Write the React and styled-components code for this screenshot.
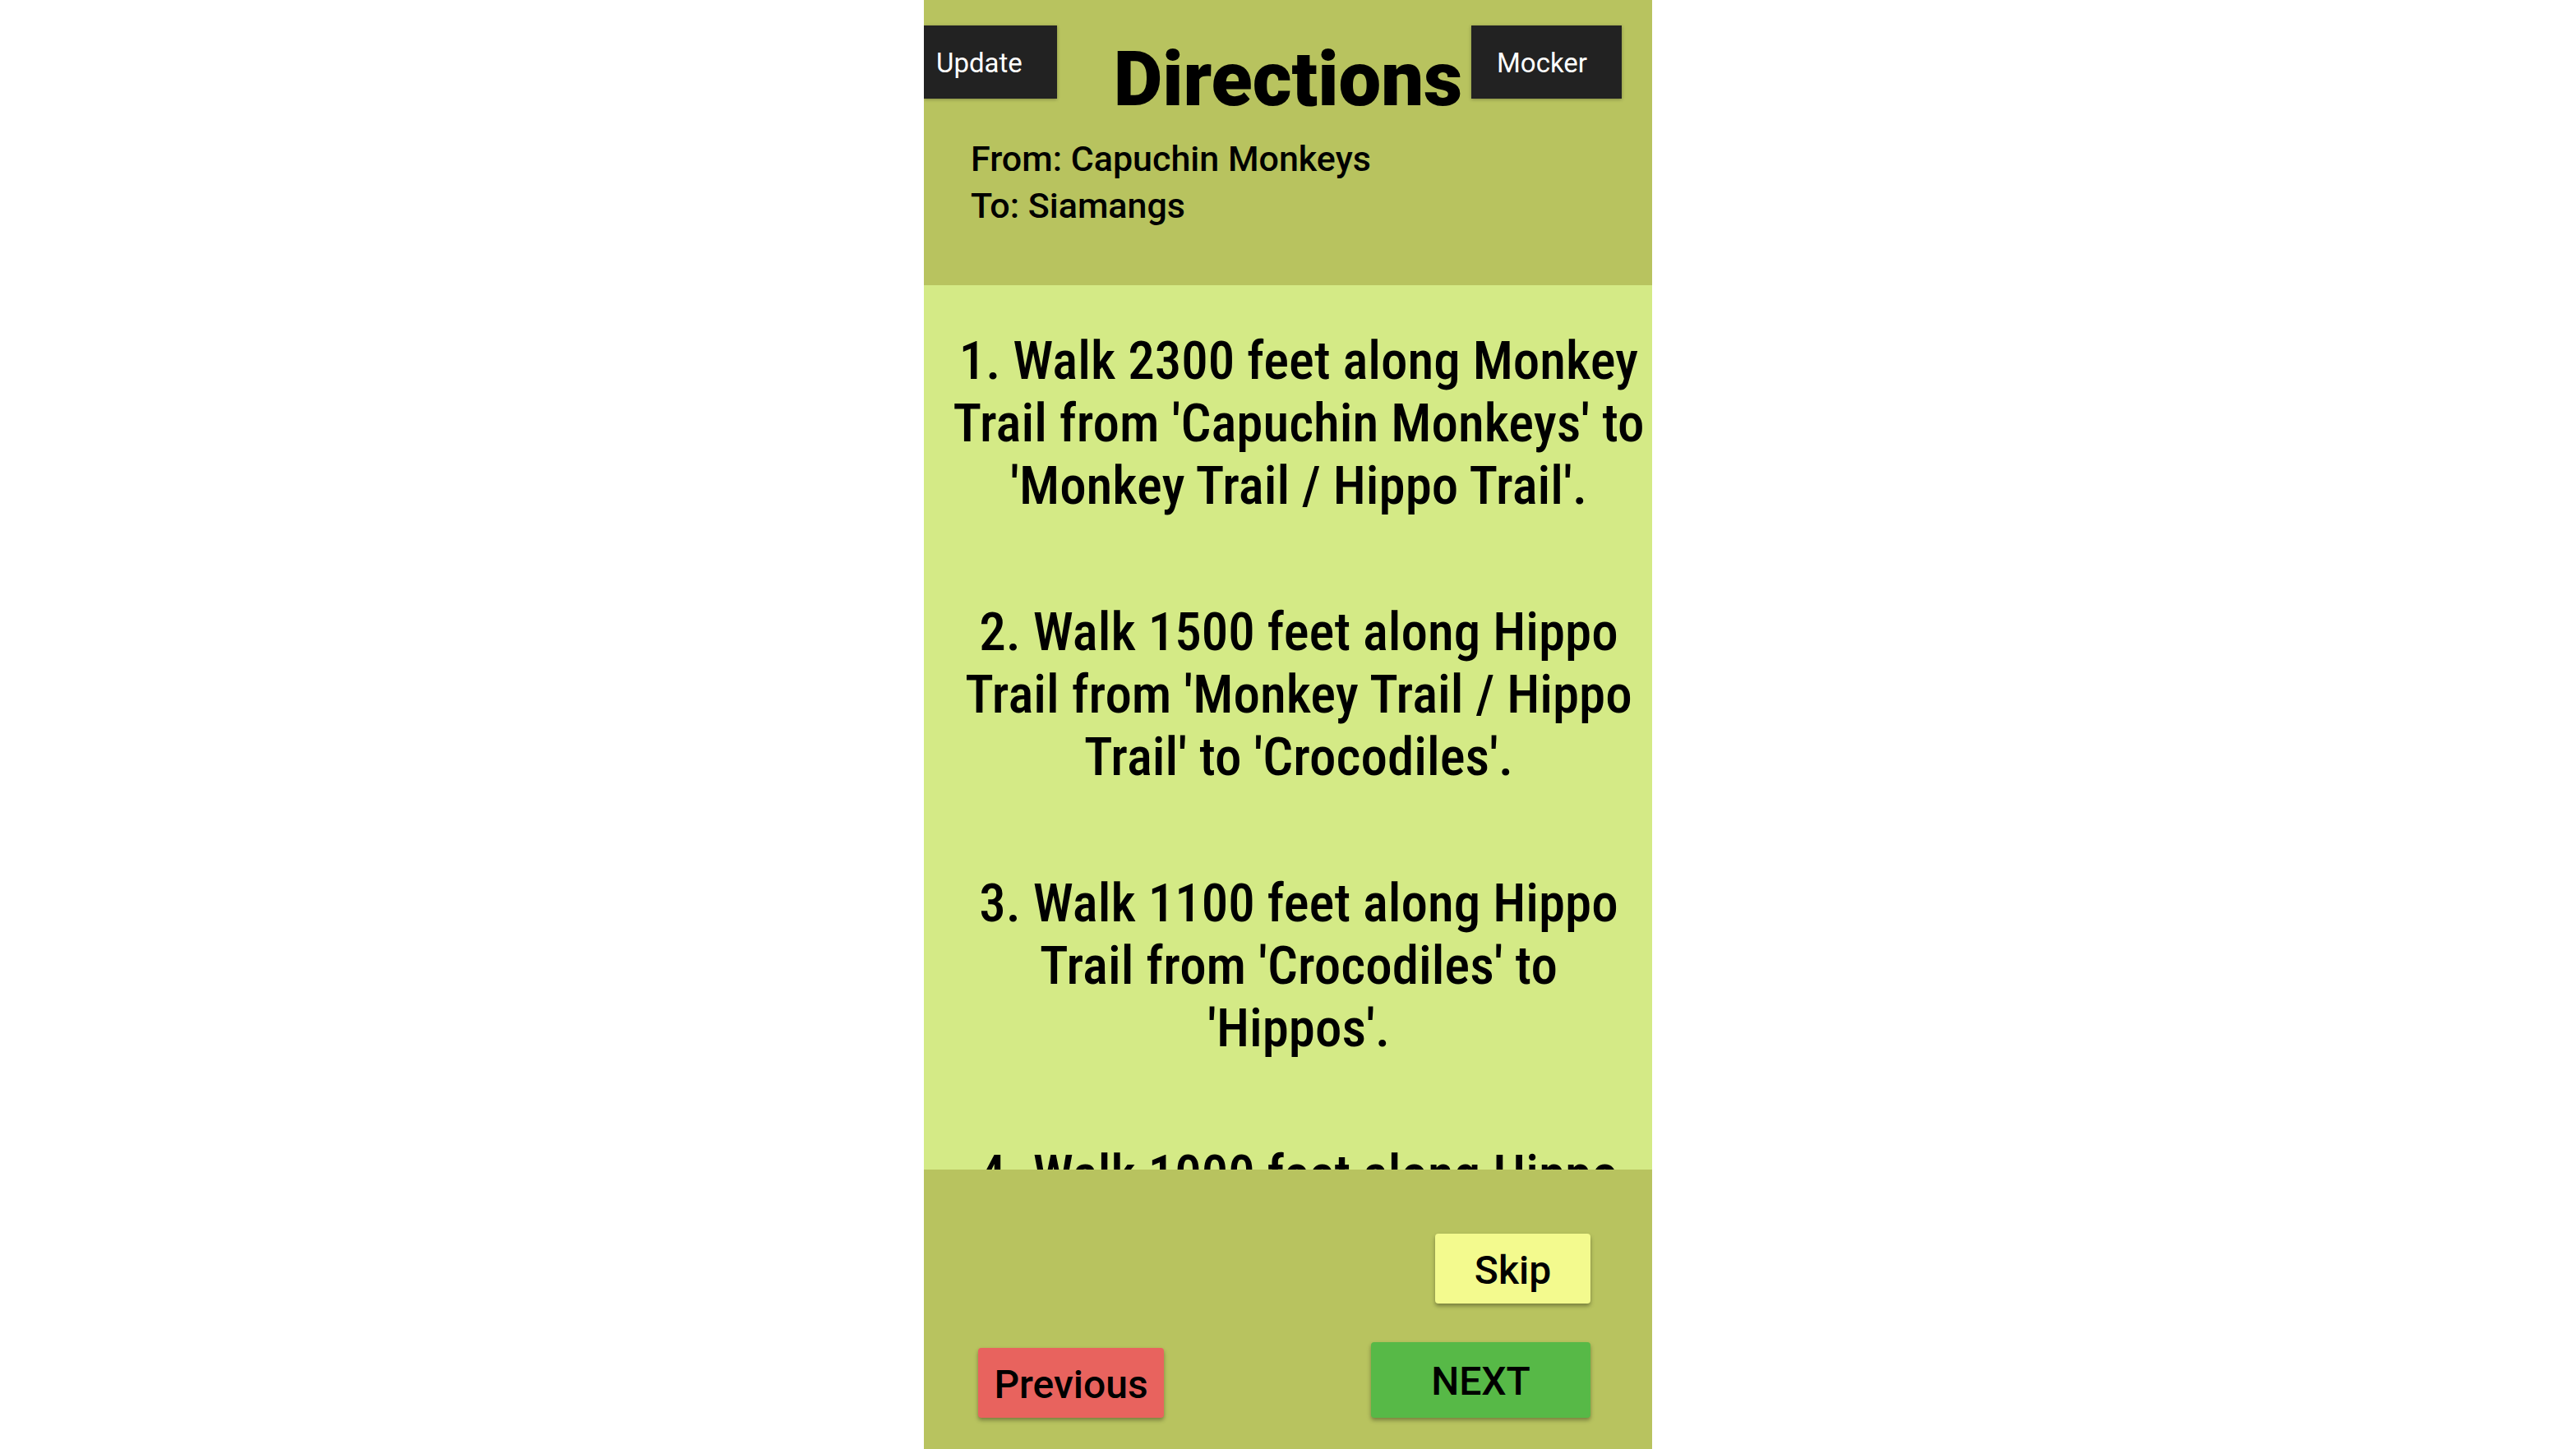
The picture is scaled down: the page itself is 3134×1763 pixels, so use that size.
import React from "react";
import styled, { createGlobalStyle } from "styled-components";

const GlobalStyle = createGlobalStyle`
  *, *::before, *::after { box-sizing: border-box; }
  body {
    margin: 0;
    background: #fff;
    color: #000;
    font-family: Roboto, "Liberation Sans", sans-serif;
  }
`;

const Screen = styled.main`
  display: flex;
  flex-direction: column;
  width: 100%;
  max-width: 886px;
  height: 100vh;
  margin: 0 auto;
  overflow: hidden;
  background: #b8c35f;
`;

const Header = styled.header`
  padding: 31px 0 68px;
`;

const TopBar = styled.div`
  display: grid;
  grid-template-columns: 1fr auto 1fr;
  align-items: start;
`;

const Title = styled.h1`
  margin: 0;
  padding-top: 12px;
  font-size: 92px;
  line-height: 108px;
  font-weight: 900;
`;

const ToolButton = styled.button`
  justify-self: ${(p) => p.$side};
  height: 89px;
  margin: 0 ${(p) => (p.$side === "end" ? 37 : 0)}px 0 0;
  padding: 2px 42px 0 ${(p) => (p.$side === "end" ? 31 : 15)}px;
  border: 0;
  background: #222;
  color: #fff;
  font: 400 33px Roboto, "Liberation Sans", sans-serif;
  box-shadow: 0 1px 4px rgba(0, 0, 0, 0.3);
`;

const Route = styled.div`
  padding: 14px 57px 0;
  font-size: 43px;
  line-height: 57px;
  font-weight: 500;
`;

const RouteLine = styled.p`
  margin: 0;
`;

const Steps = styled.ol`
  flex: 1;
  min-height: 0;
  display: flex;
  flex-direction: column;
  gap: 102px;
  margin: 0;
  padding: 54px 4px 0 30px;
  overflow: hidden;
  list-style: none;
  background: #d4ea86;
`;

const Step = styled.li`
  flex: none;
  text-align: center;
  font-family: "Roboto Condensed", Roboto, sans-serif;
  font-size: 65px;
  line-height: 76px;
  font-weight: 500;
`;

const Footer = styled.footer`
  display: flex;
  flex-direction: column;
  gap: 47px;
  padding: 78px 75px 38px 66px;
`;

const FooterRow = styled.div`
  display: flex;
  align-items: flex-end;
  justify-content: ${(p) => p.$justify};
`;

const ActionButton = styled.button`
  width: ${(p) => p.$width}px;
  height: ${(p) => p.$height}px;
  padding: 3px 0 0;
  border: 0;
  border-radius: 4px;
  background: ${(p) => p.$color};
  color: #000;
  font: 500 48px Roboto, "Liberation Sans", sans-serif;
  box-shadow: 0 3px 5px rgba(0, 0, 0, 0.35);
`;

const steps = [
  "1. Walk 2300 feet along Monkey Trail from 'Capuchin Monkeys' to 'Monkey Trail / Hippo Trail'.",
  "2. Walk 1500 feet along Hippo Trail from 'Monkey Trail / Hippo Trail' to 'Crocodiles'.",
  "3. Walk 1100 feet along Hippo Trail from 'Crocodiles' to 'Hippos'.",
  "4. Walk 1000 feet along Hippo",
];

export default function App() {
  return (
    <>
      <GlobalStyle />
      <Screen>
        <Header>
          <TopBar>
            <ToolButton type="button" $side="start">Update</ToolButton>
            <Title>Directions</Title>
            <ToolButton type="button" $side="end">Mocker</ToolButton>
          </TopBar>
          <Route>
            <RouteLine>From: Capuchin Monkeys</RouteLine>
            <RouteLine>To: Siamangs</RouteLine>
          </Route>
        </Header>
        <Steps>
          {steps.map((step) => (
            <Step key={step}>{step}</Step>
          ))}
        </Steps>
        <Footer>
          <FooterRow $justify="flex-end">
            <ActionButton type="button" $width={189} $height={85} $color="#f3fa8e">Skip</ActionButton>
          </FooterRow>
          <FooterRow $justify="space-between">
            <ActionButton type="button" $width={226} $height={85} $color="#e8635e">Previous</ActionButton>
            <ActionButton type="button" $width={267} $height={92} $color="#57b947">NEXT</ActionButton>
          </FooterRow>
        </Footer>
      </Screen>
    </>
  );
}
